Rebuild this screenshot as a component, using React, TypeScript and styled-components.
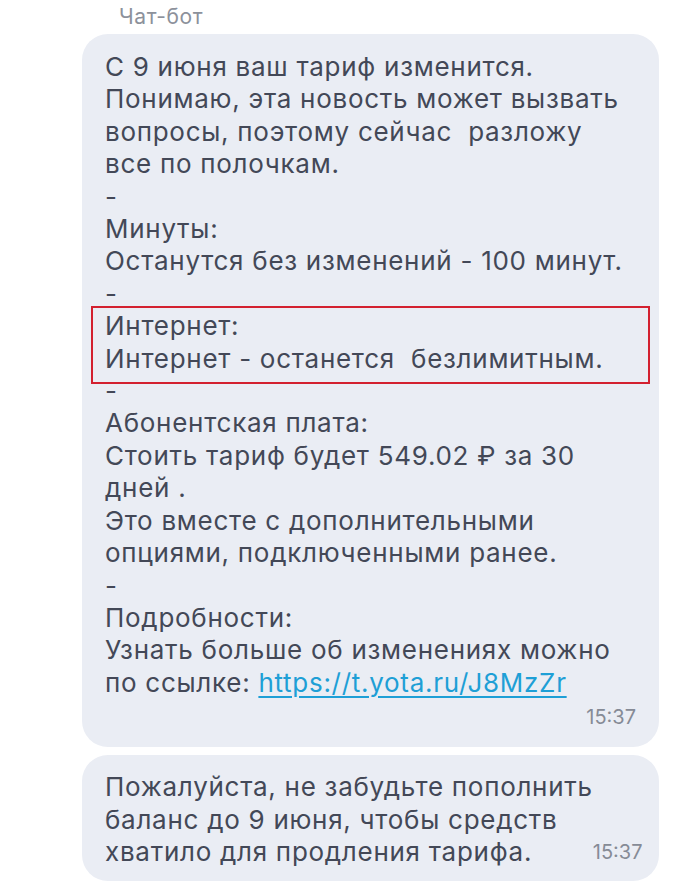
import styled, { createGlobalStyle } from 'styled-components';

const GlobalStyle = createGlobalStyle`
  body {
    margin: 0;
    background: #ffffff;
    font-family: Inter, "Noto Sans", sans-serif;
  }
`;

const Chat = styled.div`
  width: 700px;
  height: 889px;
  overflow: hidden;
  box-sizing: border-box;
  padding: 5px 41px 0 82px;
  display: flex;
  flex-direction: column;
  gap: 8px;
`;

const Sender = styled.div`
  margin: 0 0 -3px 37px;
  font-size: 21px;
  letter-spacing: 0.6px;
  line-height: 24px;
  color: #8c919b;
`;

const Bubble = styled.div<{ $inline?: boolean }>`
  background: #eaedf4;
  border-radius: 26px;
  padding: ${(p) => (p.$inline ? '16px 23px 13px' : '17px 23px 15px')};
  display: flex;
  flex-direction: ${(p) => (p.$inline ? 'row' : 'column')};
  align-items: ${(p) => (p.$inline ? 'flex-end' : 'stretch')};
  justify-content: space-between;
`;

const Text = styled.div`
  font-size: 26px;
  letter-spacing: 0.72px;
  line-height: 32.4px;
  color: #434857;
  white-space: pre;
`;

const Highlight = styled.div`
  position: relative;
  &::after {
    content: '';
    position: absolute;
    top: -4px;
    bottom: -9px;
    left: -14px;
    right: -14px;
    border: 2px solid #d3202f;
    pointer-events: none;
  }
`;

const Link = styled.a`
  color: #1e9fd6;
  text-decoration: underline;
  text-underline-offset: 4px;
  text-decoration-thickness: 2px;
`;

const Time = styled.div<{ $inline?: boolean }>`
  align-self: flex-end;
  font-size: 20px;
  line-height: ${(p) => (p.$inline ? '32.4px' : '30px')};
  color: #868b96;
  margin-top: ${(p) => (p.$inline ? '0' : '3px')};
`;

export default function App() {
  return (
    <>
      <GlobalStyle />
      <Chat>
        <Sender>Чат-бот</Sender>
        <Bubble>
          <Text>
            {`С 9 июня ваш тариф изменится.
Понимаю, эта новость может вызвать
вопросы, поэтому сейчас  разложу
все по полочкам.
-
Минуты:
Останутся без изменений - 100 минут.
-`}
          </Text>
          <Highlight>
            <Text>
              {`Интернет:
Интернет - останется  безлимитным.`}
            </Text>
          </Highlight>
          <Text>
            {`-
Абонентская плата:
Стоить тариф будет 549.02 ₽ за 30
дней .
Это вместе с дополнительными
опциями, подключенными ранее.
-
Подробности:
Узнать больше об изменениях можно
по ссылке: `}
            <Link href="#">https://t.yota.ru/J8MzZr</Link>
          </Text>
          <Time>15:37</Time>
        </Bubble>
        <Bubble $inline>
          <Text>
            {`Пожалуйста, не забудьте пополнить
баланс до 9 июня, чтобы средств
хватило для продления тарифа.`}
          </Text>
          <Time $inline>15:37</Time>
        </Bubble>
      </Chat>
    </>
  );
}
